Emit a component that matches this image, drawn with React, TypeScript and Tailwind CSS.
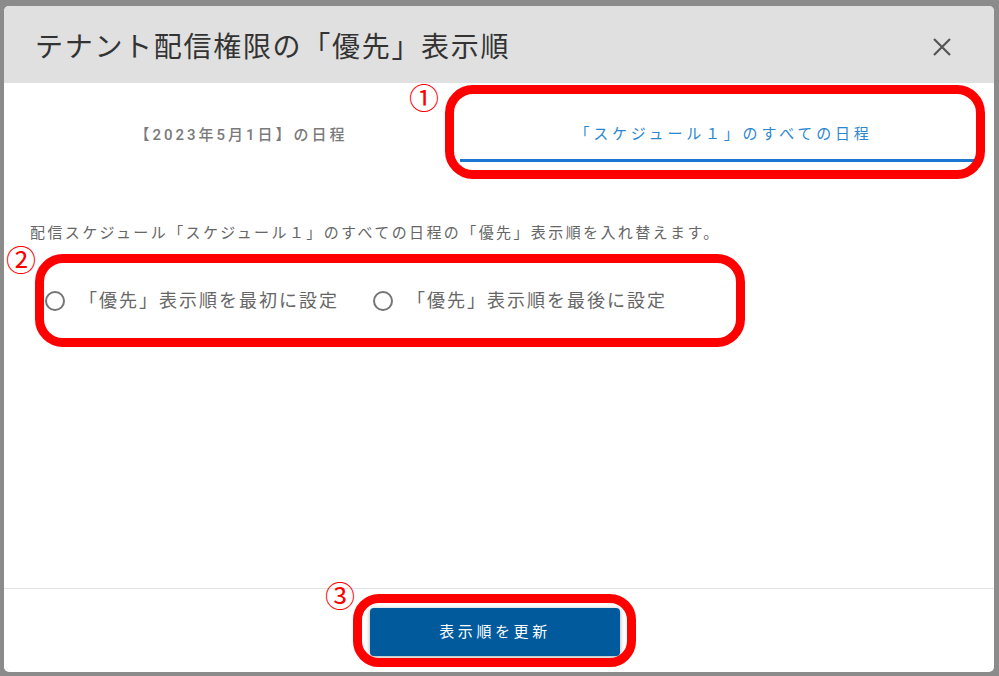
const font = "font-['Roboto','Noto_Sans_CJK_JP',sans-serif]";

const RadioOption = ({ label }: { label: string }) => (
  <label className="flex items-center gap-[14px] cursor-pointer">
    <span className="w-[20px] h-[20px] rounded-full border-2 border-[#757575] bg-white" />
    <span className="text-[18px] leading-[28px] tracking-[2px] text-[#666]">{label}</span>
  </label>
);

const Marker = ({ n, className }: { n: string; className: string }) => (
  <span
    className={`absolute text-[30px] leading-none text-[#ff0000] font-['Noto_Sans_CJK_JP',sans-serif] ${className}`}
  >
    {n}
  </span>
);

export default function App() {
  return (
    <div className={`relative w-[999px] h-[676px] overflow-hidden bg-[#8b8b8b] pt-[6px] pl-[4px] ${font}`}>
      <div className="w-[990px] h-[666px] bg-white rounded-[5px] overflow-hidden flex flex-col">
        {/* header */}
        <div className="h-[77px] shrink-0 bg-[#e0e0e0] flex items-center justify-between pl-[31px] pr-[42px] pt-[7px]">
          <h1 className="text-[28px] tracking-[1.7px] text-[#333]">テナント配信権限の「優先」表示順</h1>
          <button className="text-[#555] -mt-[3px]">
            <svg width="20" height="20" viewBox="0 0 20 20" fill="none" stroke="currentColor" strokeWidth="2.2">
              <path d="M2 2 L18 18 M18 2 L2 18" />
            </svg>
          </button>
        </div>

        {/* tabs */}
        <div className="h-[79px] shrink-0 flex">
          <div className="w-[456px] pl-[18px] pt-[27px] flex items-center justify-center border-b-2 border-transparent">
            <span className="text-[15px] font-medium tracking-[3px] text-[#7a7a7a]">【2023年5月1日】の日程</span>
          </div>
          <div className="w-[515px] pl-[12px] pt-[27px] flex items-center justify-center border-b-[3px] border-[#1976d2]">
            <span className="text-[15px] tracking-[3.8px] text-[#2b87d1]">「スケジュール１」のすべての日程</span>
          </div>
        </div>

        {/* body */}
        <div className="flex-1 px-[26px]">
          <p className="mt-[60px] text-[15px] leading-[22px] tracking-[2.4px] text-[#666]">
            配信スケジュール「スケジュール１」のすべての日程の「優先」表示順を入れ替えます。
          </p>
          <div className="mt-[43px] pl-[15px] flex items-center gap-[34px]">
            <RadioOption label="「優先」表示順を最初に設定" />
            <RadioOption label="「優先」表示順を最後に設定" />
          </div>
        </div>

        {/* footer */}
        <div className="h-[84px] shrink-0 border-t border-[#e2e2e2] flex justify-center pt-[19px] pr-[8px]">
          <button className="w-[250px] h-[48px] rounded-[4px] bg-[#005a9c] text-white text-[15px] tracking-[3.6px] shadow-[0_1px_4px_rgba(0,0,0,0.35)]">
            表示順を更新
          </button>
        </div>
      </div>

      {/* annotations */}
      <Marker n="①" className="left-[409px] top-[81px]" />
      <div className="absolute left-[445px] top-[85px] w-[540px] h-[94px] border-[9px] border-[#ff0000] rounded-[28px]" />
      <Marker n="②" className="left-[6px] top-[243px]" />
      <div className="absolute left-[35px] top-[254px] w-[710px] h-[93px] border-[9px] border-[#ff0000] rounded-[28px]" />
      <Marker n="③" className="left-[325px] top-[579px]" />
      <div className="absolute left-[353px] top-[594px] w-[283px] h-[73px] border-[9px] border-[#ff0000] rounded-[26px]" />
    </div>
  );
}
